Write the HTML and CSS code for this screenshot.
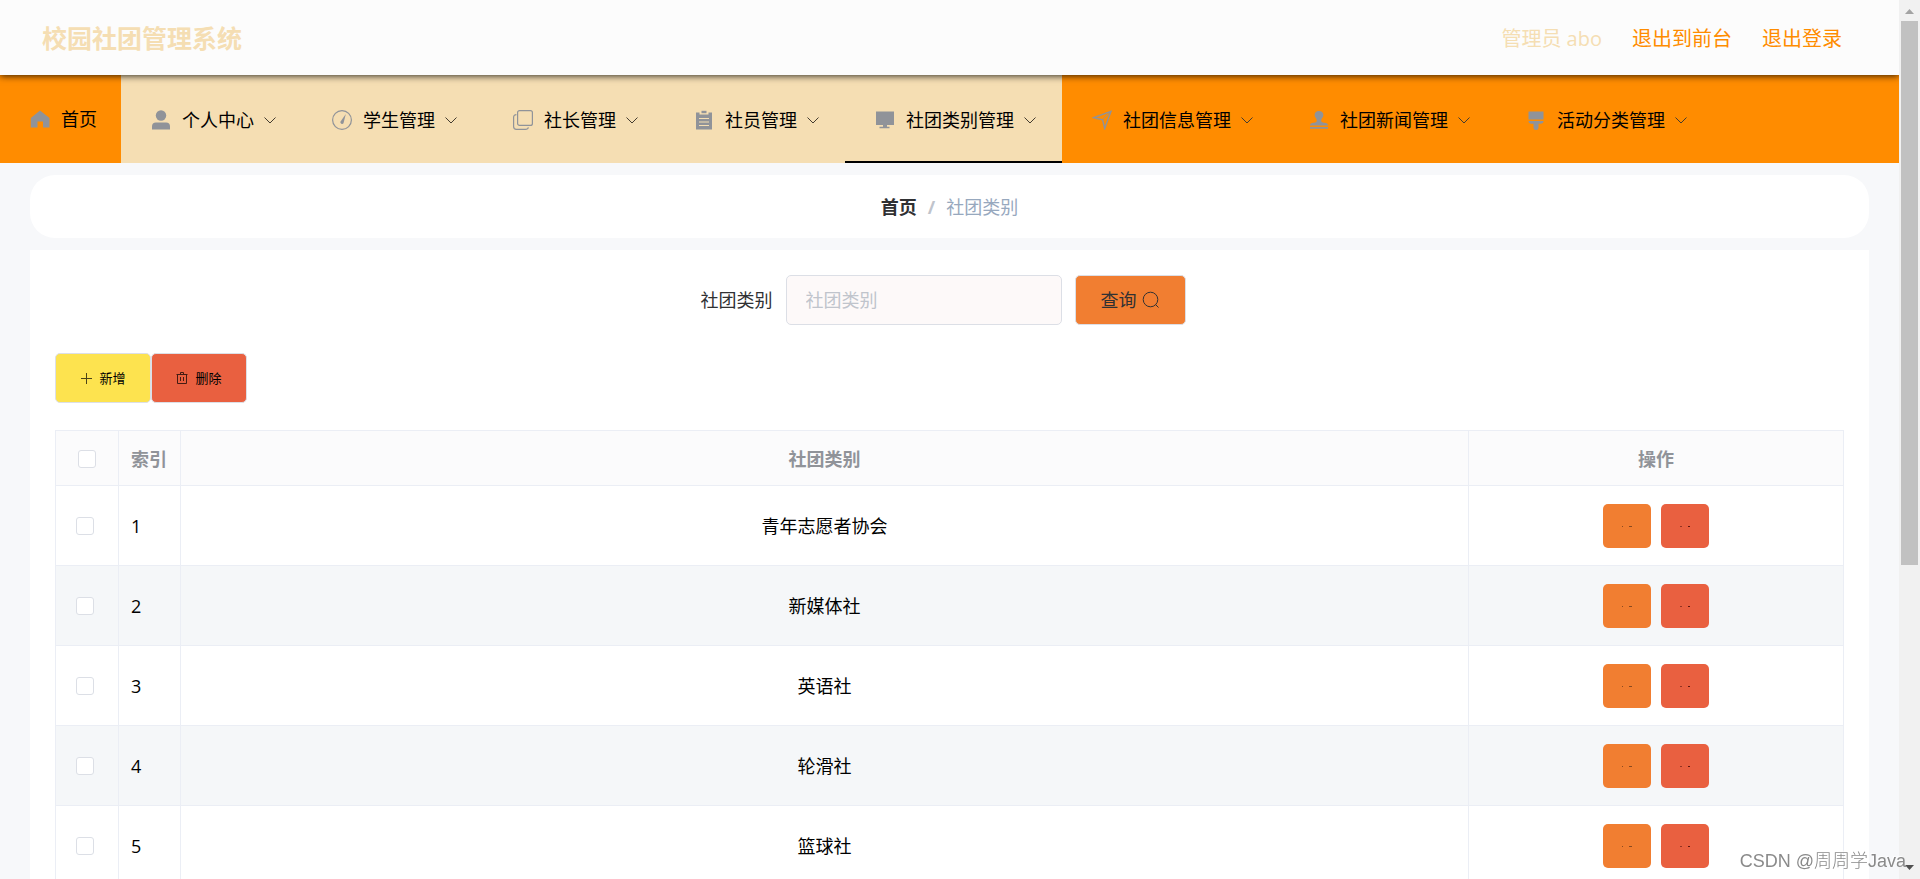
FILE: index.html
```html
<!DOCTYPE html>
<html lang="zh-CN">
<head>
<meta charset="utf-8">
<title>校园社团管理系统</title>
<link rel="stylesheet" href="styles.css">
</head>
<body>
<svg class="defs" aria-hidden="true">
  <symbol id="home" viewBox="0 0 20 20"><path d="M10 1.500 19.500 9v9.500h-6.500v-6H7.500v6H.8V9z"/></symbol>
  <symbol id="user" viewBox="0 0 20 20"><circle cx="10" cy="5.500" r="5.200"/><path d="M1 19.500v-3q0-4 4-4h10q4 0 4 4v3z"/></symbol>
  <symbol id="meter" viewBox="0 0 20 20"><circle cx="10" cy="10" r="9.400" fill="none" stroke="currentColor" stroke-width="1.200"/><path d="M13.800 4 11.600 13a1.700 1.700 0 1 1-3-1.600z"/></symbol>
  <symbol id="copy" viewBox="0 0 20 20"><g fill="none" stroke="currentColor" stroke-width="1.200"><rect x="4.600" y=".6" width="14.800" height="14.800" rx="2"/><path d="M3.400 4.600Q.6 4.600.6 7.400v9.200q0 2.800 2.800 2.800h9q2.600 0 3-2"/></g></symbol>
  <symbol id="order" viewBox="0 0 20 20"><path fill-rule="evenodd" d="M2 2.500h3.500V4.600h9V2.500H18V19.500H2zM5 8v1h10V8zM5 11.500v1h10v-1zM5 15v1h10v-1z"/><path d="M7.500.8h5v2.400h-5z"/></symbol>
  <symbol id="platform" viewBox="0 0 20 20"><path d="M1 1.500h18V15H1zM8 15h4v1.800h2.500v1.500h-10v-1.500H8z"/></symbol>
  <symbol id="position" viewBox="0 0 20 20"><path d="M19 1.300 12.700 18.500 10.600 9.800 1.700 7.600z" fill="none" stroke="currentColor" stroke-width="1.400"/><path d="M19 1.300 10.600 9.800" stroke="currentColor"/></symbol>
  <symbol id="stamp" viewBox="0 0 20 20"><path d="M10 1c3 0 4.400 1.800 4.400 4 0 2.600-2.200 3.200-2.200 5.500 0 1.500.8 2 3 2.200 2.600.2 3.800.8 3.800 2.800H1c0-2 1.200-2.600 3.800-2.800 2.200-.2 3-.7 3-2.200 0-2.300-2.200-2.900-2.200-5.500 0-2.200 1.400-4 4.400-4zM1 17h18v1.700H1z"/></symbol>
  <symbol id="brush" viewBox="0 0 20 20"><path d="M2.500 1.500h15v8h-15zM2.500 11h15q0 2.700-3 2.700h-2v4q0 2.300-2.500 2.300t-2.500-2.300v-4h-2q-3 0-3-2.700z"/></symbol>
  <symbol id="down" viewBox="0 0 14 14"><path d="M1.500 4.500 7 10l5.500-5.500" fill="none" stroke="currentColor"/></symbol>
  <symbol id="search" viewBox="0 0 18 18"><circle cx="8.500" cy="8.500" r="7.300" fill="none" stroke="currentColor"/><path d="m13.500 13.500 3 3" stroke="currentColor"/></symbol>
  <symbol id="plus" viewBox="0 0 12 12"><path d="M6.500 1v11M1 6.500h11" stroke="currentColor"/></symbol>
  <symbol id="trash" viewBox="0 0 12 12"><path d="M.5 2.500h11M4.500 2.500v-2h3v2M1.500 2.500v9h9v-9M4.500 5v4M7.500 5v4" fill="none" stroke="currentColor"/></symbol>
  <symbol id="mark-edit" viewBox="0 0 12 12"><path d="M1 6.500h1M8 6.500h3" stroke="currentColor"/></symbol>
  <symbol id="mark-delete" viewBox="0 0 12 12"><path d="M1 6.500h2" stroke="currentColor" opacity=".6"/><path d="M9 6.500h2" stroke="currentColor"/></symbol>
</svg>

<div class="app">
  <header class="topbar">
    <h1 class="brand">校园社团管理系统</h1>
    <div class="account">
      <span class="who">管理员 abo</span>
      <a href="#">退出到前台</a>
      <a href="#">退出登录</a>
    </div>
  </header>

  <nav class="menu">
    <a class="item home" href="#"><svg class="ico"><use href="#home"/></svg>首页</a>
    <a class="item light" href="#"><svg class="ico"><use href="#user"/></svg>个人中心<svg class="arrow"><use href="#down"/></svg></a>
    <a class="item light" href="#"><svg class="ico"><use href="#meter"/></svg>学生管理<svg class="arrow"><use href="#down"/></svg></a>
    <a class="item light" href="#"><svg class="ico"><use href="#copy"/></svg>社长管理<svg class="arrow"><use href="#down"/></svg></a>
    <a class="item light" href="#"><svg class="ico"><use href="#order"/></svg>社员管理<svg class="arrow"><use href="#down"/></svg></a>
    <a class="item light active" href="#"><svg class="ico"><use href="#platform"/></svg>社团类别管理<svg class="arrow"><use href="#down"/></svg></a>
    <a class="item" href="#"><svg class="ico"><use href="#position"/></svg>社团信息管理<svg class="arrow"><use href="#down"/></svg></a>
    <a class="item" href="#"><svg class="ico"><use href="#stamp"/></svg>社团新闻管理<svg class="arrow"><use href="#down"/></svg></a>
    <a class="item" href="#"><svg class="ico"><use href="#brush"/></svg>活动分类管理<svg class="arrow"><use href="#down"/></svg></a>
  </nav>

  <main class="content">
    <div class="crumbs"><a href="#">首页</a><span class="sep">/</span><span class="here">社团类别</span></div>

    <section class="card">
      <form class="search">
        <label for="category">社团类别</label>
        <input id="category" type="text" placeholder="社团类别">
        <button class="query" type="button">查询<svg><use href="#search"/></svg></button>
      </form>

      <div class="tools">
        <button class="add" type="button"><svg><use href="#plus"/></svg>新增</button>
        <button class="del" type="button"><svg><use href="#trash"/></svg>删除</button>
      </div>

      <table class="grid">
        <colgroup><col class="c-check"><col class="c-index"><col><col class="c-ops"></colgroup>
        <thead>
          <tr><th><input type="checkbox" aria-label="全选"></th><th class="index">索引</th><th>社团类别</th><th>操作</th></tr>
        </thead>
        <tbody>
          <tr><td class="check"><input type="checkbox" aria-label="选择 1"></td><td class="index">1</td><td>青年志愿者协会</td><td><div class="ops"><button class="edit" type="button" aria-label="修改"><svg><use href="#mark-edit"/></svg></button><button class="remove" type="button" aria-label="删除"><svg><use href="#mark-delete"/></svg></button></div></td></tr>
          <tr><td class="check"><input type="checkbox" aria-label="选择 2"></td><td class="index">2</td><td>新媒体社</td><td><div class="ops"><button class="edit" type="button" aria-label="修改"><svg><use href="#mark-edit"/></svg></button><button class="remove" type="button" aria-label="删除"><svg><use href="#mark-delete"/></svg></button></div></td></tr>
          <tr><td class="check"><input type="checkbox" aria-label="选择 3"></td><td class="index">3</td><td>英语社</td><td><div class="ops"><button class="edit" type="button" aria-label="修改"><svg><use href="#mark-edit"/></svg></button><button class="remove" type="button" aria-label="删除"><svg><use href="#mark-delete"/></svg></button></div></td></tr>
          <tr><td class="check"><input type="checkbox" aria-label="选择 4"></td><td class="index">4</td><td>轮滑社</td><td><div class="ops"><button class="edit" type="button" aria-label="修改"><svg><use href="#mark-edit"/></svg></button><button class="remove" type="button" aria-label="删除"><svg><use href="#mark-delete"/></svg></button></div></td></tr>
          <tr><td class="check"><input type="checkbox" aria-label="选择 5"></td><td class="index">5</td><td>篮球社</td><td><div class="ops"><button class="edit" type="button" aria-label="修改"><svg><use href="#mark-edit"/></svg></button><button class="remove" type="button" aria-label="删除"><svg><use href="#mark-delete"/></svg></button></div></td></tr>
        </tbody>
      </table>
    </section>
  </main>
</div>

<div class="scrollbar" aria-hidden="true">
  <svg class="cap up" viewBox="0 0 9 5"><path d="M4.500 0 9 5H0z"/></svg>
  <div class="track"><div class="thumb"></div></div>
  <svg class="cap" viewBox="0 0 9 5"><path d="M0 0h9L4.500 5z"/></svg>
</div>
<div class="watermark">CSDN @周周学Java</div>
</body>
</html>
```
FILE: styles.css
```css
* { box-sizing: border-box; }

body {
  display: flex;
  height: 100vh;
  margin: 0;
  overflow: hidden;
  background: #f7f8fa;
  color: #000;
  font: 400 18px/24px "Open Sans", "Noto Sans CJK SC", sans-serif;
}

a { color: inherit; text-decoration: none; }
button, input { font: inherit; }
button { padding: 0; cursor: pointer; }
svg { flex: none; fill: currentColor; }
.defs { position: absolute; width: 0; height: 0; }

.app { flex: 1; min-width: 0; height: 100vh; overflow: hidden; }

.topbar {
  position: relative;
  display: flex;
  align-items: center;
  justify-content: space-between;
  height: 75px;
  padding: 0 57px 0 42px;
  background: #fcfcfc;
  box-shadow: 0 1px 7px rgba(0, 0, 0, .8);
}
.brand { margin: 0; color: #f5deb3; font-size: 25px; font-weight: 700; }
.account { display: flex; gap: 30px; padding-top: 2px; color: #ff8c00; font-size: 20px; }
.who { color: #f5deb3; }

.menu { display: flex; height: 88px; background: #ff8c00; }
.item {
  display: flex;
  align-items: center;
  padding: 0 25px 0 30px;
  border: 0 solid transparent;
  border-top-width: 2px;
  white-space: nowrap;
}
.home { padding-right: 24px; border-top-width: 0; }
.light { background: #f5deb3; }
.active { border-bottom: 2px solid #000; padding-top: 2px; }
.ico { width: 20px; height: 20px; margin-right: 11px; color: #909399; }
.arrow { width: 14px; height: 14px; margin-left: 9px; color: #443c30; }

.content { display: flex; flex-direction: column; gap: 12px; padding: 12px 30px 0; }
.crumbs {
  display: flex;
  align-items: center;
  justify-content: center;
  gap: 11px;
  height: 63px;
  border-radius: 25px;
  background: #fff;
  color: #303133;
}
.crumbs a { font-weight: 700; }
.sep { color: #c0c4cc; font-weight: 700; }
.here { color: #97a8be; }

.card { padding: 25px; background: #fff; }
.search { display: flex; align-items: center; justify-content: center; padding-right: 13px; color: #303133; }
.search input {
  width: 276px;
  height: 50px;
  margin: 0 13px;
  padding: 0 19px;
  border: 1px solid #dcdfe6;
  border-radius: 5px;
  background: #fdf9f9;
}
.search input::placeholder { color: #c0c4cc; opacity: 1; }
.query, .add, .del {
  display: flex;
  align-items: center;
  justify-content: center;
  gap: 7px;
  height: 50px;
  border: 1px solid #dcdfe6;
  border-radius: 5px;
}
.query { width: 111px; background: #f17e31; color: #303133; gap: 5px; }
.query svg { width: 18px; height: 18px; }

.tools { display: flex; margin: 28px 0 27px; }
.add, .del { width: 96px; background: #fde34f; color: #000; font-size: 13px; }
.del { background: #e96040; }
.tools svg { width: 12px; height: 12px; opacity: .7; }

.grid { width: 100%; border-collapse: collapse; table-layout: fixed; text-align: center; }
.grid th, .grid td { padding: 0; border: 1px solid #ebeef5; }
.grid th { height: 55px; padding-top: 1px; background: #fbfbfc; color: #909399; font-weight: 700; }
.grid td { height: 80px; }
.grid tbody tr:nth-child(even) { background: #f5f7f9; }
.grid .index { padding-left: 12px; text-align: left; }
.grid .check { padding-right: 4px; }
.c-check { width: 63px; }
.c-index { width: 62px; }
.c-ops { width: 375px; }
.grid input {
  display: block;
  width: 18px;
  height: 18px;
  margin: 0 auto;
  border: 1px solid #dcdfe6;
  border-radius: 3px;
  background: #fff;
  appearance: none;
}
.ops { display: flex; justify-content: center; gap: 10px; }
.ops button {
  display: flex;
  align-items: center;
  justify-content: center;
  width: 48px;
  height: 44px;
  border: 0;
  border-radius: 5px;
  background: #f17e31;
  color: #8a4a20;
}
.ops .remove { background: #e96040; color: #601810; }
.ops svg { width: 12px; height: 12px; }

.scrollbar {
  display: flex;
  flex: none;
  flex-direction: column;
  align-items: center;
  width: 21px;
  height: 100vh;
  padding: 9px 2px;
  background: #f1f1f1;
}
.cap { width: 9px; height: 5px; color: #505050; }
.up { color: #a3a3a3; }
.track { flex: 1; width: 100%; padding: 7px 0; }
.thumb { height: 65%; background: #c1c1c1; }

.watermark {
  position: fixed;
  right: 14px;
  bottom: 6px;
  color: #8a8a8a;
  font-family: "Liberation Sans", "Noto Sans CJK SC", sans-serif;
  font-size: 18px;
  font-weight: 300;
  text-shadow: -1px -1px 1px #fff;
}
```
